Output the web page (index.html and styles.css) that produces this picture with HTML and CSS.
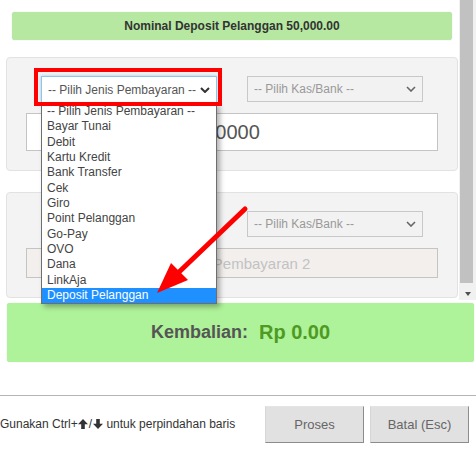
FILE: index.html
```html
<!DOCTYPE html>
<html lang="id">
<head>
  <meta charset="UTF-8">
  <meta name="viewport" content="width=device-width, initial-scale=1.0">
  <title>Pembayaran</title>
  <link rel="stylesheet" href="styles.css">
</head>
<body>

  <div class="top">
    <div class="content">
      <div class="deposit-info">Nominal Deposit Pelanggan 50,000.00</div>

      <!-- pembayaran 1 -->
      <div class="card">
        <div class="pick-row">
          <div class="pick">
            <div class="select focused">
              <span>-- Pilih Jenis Pembayaran --</span>
              <svg class="chevron" width="10" height="6" viewBox="0 0 10 6"><polyline points="1,1 5,5 9,1" fill="none" stroke="#333" stroke-width="2"/></svg>
            </div>
            <ul class="options">
              <li>-- Pilih Jenis Pembayaran --</li>
              <li>Bayar Tunai</li>
              <li>Debit</li>
              <li>Kartu Kredit</li>
              <li>Bank Transfer</li>
              <li>Cek</li>
              <li>Giro</li>
              <li>Point Pelanggan</li>
              <li>Go-Pay</li>
              <li>OVO</li>
              <li>Dana</li>
              <li>LinkAja</li>
              <li class="active">Deposit Pelanggan</li>
            </ul>
          </div>
          <div class="pick">
            <div class="select muted">
              <span>-- Pilih Kas/Bank --</span>
              <svg class="chevron" width="10" height="6" viewBox="0 0 10 6"><polyline points="1,1 5,5 9,1" fill="none" stroke="#666" stroke-width="1.6"/></svg>
            </div>
          </div>
        </div>
        <input class="amount" type="text" value="50000" readonly>
      </div>

      <!-- pembayaran 2 -->
      <div class="card">
        <div class="pick-row">
          <div class="pick">
            <div class="select">
              <span>-- Pilih Jenis Pembayaran --</span>
              <svg class="chevron" width="10" height="6" viewBox="0 0 10 6"><polyline points="1,1 5,5 9,1" fill="none" stroke="#333" stroke-width="2"/></svg>
            </div>
          </div>
          <div class="pick">
            <div class="select muted">
              <span>-- Pilih Kas/Bank --</span>
              <svg class="chevron" width="10" height="6" viewBox="0 0 10 6"><polyline points="1,1 5,5 9,1" fill="none" stroke="#666" stroke-width="1.6"/></svg>
            </div>
          </div>
        </div>
        <input class="amount small" type="text" placeholder="Nominal Pembayaran 2" disabled>
      </div>
    </div>

    <div class="scrollbar">
      <div class="thumb"></div>
      <div class="scroll-down"></div>
    </div>
  </div>

  <div class="change">
    <span class="change-label">Kembalian:</span>
    <span class="change-value">Rp 0.00</span>
  </div>

  <div class="footer">
    <p class="hint">Gunakan Ctrl+<svg class="key" width="10" height="10" viewBox="0 0 10 10"><path d="M5 0 L10 5.2 L6.8 5.2 L6.8 10 L3.2 10 L3.2 5.2 L0 5.2 Z" fill="#333"/></svg>/<svg class="key" width="10" height="10" viewBox="0 0 10 10"><path d="M5 10 L10 4.8 L6.8 4.8 L6.8 0 L3.2 0 L3.2 4.8 L0 4.8 Z" fill="#333"/></svg> untuk perpindahan baris</p>
    <div class="actions">
      <button>Proses</button>
      <button>Batal (Esc)</button>
    </div>
  </div>

  <!-- tanda merah -->
  <svg class="annotation" width="476" height="457" viewBox="0 0 476 457">
    <rect x="36" y="70" width="184" height="34" fill="none" stroke="#f00" stroke-width="4"/>
    <line x1="245" y1="209" x2="178" y2="273" stroke="#f00" stroke-width="5" stroke-linecap="round"/>
    <polygon points="157,293 171,263 188,280" fill="#f00"/>
  </svg>

</body>
</html>
```

FILE: styles.css
```css
body {
  margin: 0;
  font-family: "Liberation Sans", Arial, sans-serif;
  color: #333;
  background: #fff;
  position: relative;
  width: 476px;
  height: 457px;
  overflow: hidden;
}

.top {
  display: flex;
  height: 300px;
}

.content {
  flex: 1;
  padding: 12px 1px 0 6px;
}

.deposit-info {
  margin: 0 6px;
  height: 28px;
  line-height: 28px;
  background: #b6e8a1;
  border-radius: 3px;
  box-shadow: 0 0 1px rgba(0, 0, 0, 0.25);
  text-align: center;
  font-size: 12px;
  font-weight: bold;
  color: #333;
}

.card {
  margin-top: 17px;
  padding: 18px 19px 19px;
  background: #f3f3f3;
  border: 1px solid #e2e2e2;
  border-radius: 4px;
}

.card + .card {
  margin-top: 21px;
}

.pick-row {
  display: grid;
  grid-template-columns: 1fr 1fr;
  justify-items: center;
  margin-bottom: 10px;
}

.pick {
  position: relative;
  width: 176px;
}

.select {
  box-sizing: border-box;
  height: 27px;
  display: flex;
  align-items: center;
  justify-content: space-between;
  padding: 0 6px 0 6px;
  background: #fff;
  border: 1px solid #c8c8c8;
  font-size: 12px;
  color: #555;
}

.select.focused {
  border-color: #93c3e8;
  box-shadow: 0 0 3px rgba(102, 175, 233, 0.6);
}

.select.muted {
  height: 26px;
  background: #f2f2f2;
  color: #999;
}

/* daftar pilihan yang sedang terbuka */
.options {
  position: absolute;
  top: 100%;
  left: 0;
  z-index: 5;
  box-sizing: border-box;
  width: 100%;
  margin: 0;
  padding: 0;
  list-style: none;
  background: #fff;
  border: 1px solid #6e6e6e;
  box-shadow: 3px 3px 5px rgba(0, 0, 0, 0.3);
}

.options li {
  padding-left: 5px;
  font-size: 12px;
  line-height: 15.33px;
  color: #444;
}

.options li.active {
  background: #1e90ff;
  color: #fff;
}

.amount {
  display: block;
  box-sizing: border-box;
  width: 100%;
  height: 38px;
  padding: 0;
  background: #fff;
  border: 1px solid #c4c4c4;
  font-family: inherit;
  font-size: 20px;
  color: #555;
  text-align: center;
  outline: none;
}

.amount.small {
  height: 30px;
  font-size: 15px;
  background: #f2efed;
}

.amount::placeholder {
  color: #c2c2c2;
}

.scrollbar {
  width: 17px;
  display: flex;
  flex-direction: column;
  background: #f1f1f1;
}

.thumb {
  height: 283px;
  margin: 0 3px 0 1px;
  background: #c1c1c1;
}

.scroll-down {
  flex: 1;
  display: flex;
  justify-content: center;
  padding-top: 9px;
}

.scroll-down::after {
  content: '';
  width: 0;
  height: 0;
  border-left: 3.5px solid transparent;
  border-right: 3.5px solid transparent;
  border-top: 4px solid #505050;
}

.change {
  margin: 3px 2px 0 7px;
  height: 59px;
  display: flex;
  align-items: center;
  justify-content: center;
  gap: 11px;
  background: #aef299;
  border-radius: 3px;
  box-shadow: 0 0 1px rgba(0, 0, 0, 0.25);
  font-weight: bold;
}

.change-label {
  font-size: 18px;
  color: #555;
}

.change-value {
  font-size: 20px;
  color: #4f9a22;
}

.footer {
  margin-top: 33px;
  padding: 10px 7px 0 0;
  border-top: 1px solid #b5b5b5;
  display: flex;
  align-items: center;
  justify-content: space-between;
}

.hint {
  margin: 0 0 2px;
  font-size: 12px;
  color: #333;
}

.key {
  vertical-align: -1px;
  margin: 0 0.5px;
}

.actions {
  display: flex;
  gap: 6px;
}

.actions button {
  width: 99px;
  height: 37px;
  background: #e1e1e1;
  border: 1px solid;
  border-color: #e4e4e4 #8c8c8c #8c8c8c #d6d6d6;
  font-family: inherit;
  font-size: 13px;
  color: #666;
  cursor: pointer;
}

/* anotasi merah di atas layar */
.annotation {
  position: absolute;
  top: 0;
  left: 0;
  z-index: 10;
  pointer-events: none;
}
```
